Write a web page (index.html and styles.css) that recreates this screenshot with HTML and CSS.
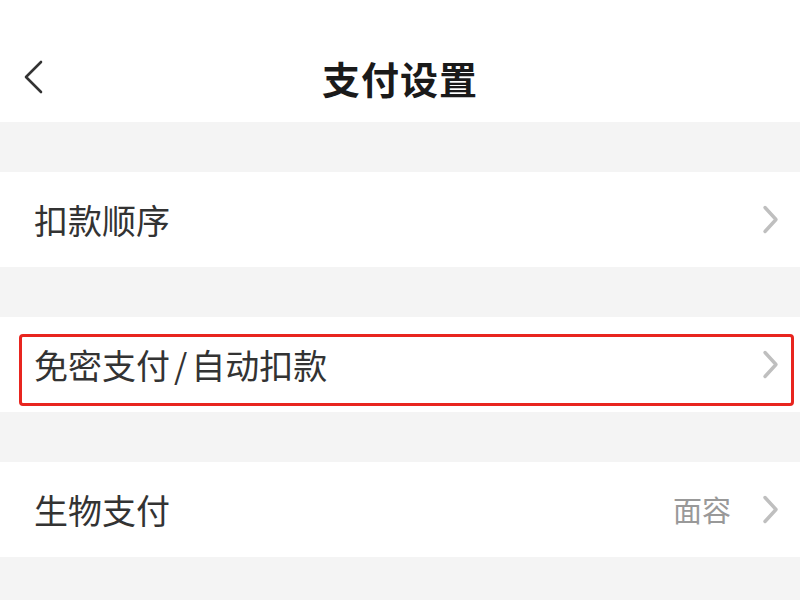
FILE: index.html
```html
<!DOCTYPE html>
<html lang="zh-CN">
<head>
<meta charset="utf-8">
<title>支付设置</title>
<link rel="stylesheet" href="styles.css">
</head>
<body>
<div class="page">
  <header class="header">
    <span class="back">
      <svg width="22" height="34" viewBox="0 0 22 34"><polyline points="19,2 4,17 19,32" fill="none" stroke="#333" stroke-width="2.6" stroke-linecap="round" stroke-linejoin="round"/></svg>
    </span>
    <h1 class="title">支付设置</h1>
  </header>
  <div class="gap"></div>
  <div class="row">
    <span class="label">扣款顺序</span>
    <span class="right">
      <svg class="chev" width="17" height="29" viewBox="0 0 17 29"><polyline points="3,2.5 14,14.5 3,26.5" fill="none" stroke="#bfbfbf" stroke-width="3.4" stroke-linecap="round" stroke-linejoin="round"/></svg>
    </span>
  </div>
  <div class="gap"></div>
  <div class="row row-marked">
    <span class="label">免密支付<span class="slash">/</span>自动扣款</span>
    <span class="right">
      <svg class="chev" width="17" height="29" viewBox="0 0 17 29"><polyline points="3,2.5 14,14.5 3,26.5" fill="none" stroke="#bfbfbf" stroke-width="3.4" stroke-linecap="round" stroke-linejoin="round"/></svg>
    </span>
    <div class="mark"></div>
  </div>
  <div class="gap"></div>
  <div class="row">
    <span class="label">生物支付</span>
    <span class="right">
      <span class="value">面容</span>
      <svg class="chev" width="17" height="29" viewBox="0 0 17 29"><polyline points="3,2.5 14,14.5 3,26.5" fill="none" stroke="#bfbfbf" stroke-width="3.4" stroke-linecap="round" stroke-linejoin="round"/></svg>
    </span>
  </div>
</div>
</body>
</html>
```

FILE: styles.css
```css
* { box-sizing: border-box; }
html, body {
  margin: 0;
  padding: 0;
  background: #f4f4f4;
  font-family: "Noto Sans CJK SC", "Noto Sans", sans-serif;
}
.page {
  width: 800px;
  height: 600px;
  overflow: hidden;
  display: flex;
  flex-direction: column;
}
.header {
  height: 122px;
  background: #fff;
  display: flex;
  align-items: center;
  justify-content: center;
  position: relative;
}
.back {
  position: absolute;
  left: 22px;
  top: 60px;
  display: flex;
}
.title {
  margin: 0;
  margin-top: 34px;
  font-size: 38px;
  font-weight: 700;
  color: #1a1a1a;
  line-height: 1;
  letter-spacing: 1px;
}
.gap { height: 50px; flex: none; }
.row {
  height: 95px;
  flex: none;
  background: #fff;
  display: flex;
  align-items: center;
  justify-content: space-between;
  padding: 0 21px 0 34px;
}
.row-marked { position: relative; }
.label {
  font-size: 34px;
  color: #333;
  line-height: 1;
}
.slash { padding: 0 4px; }
.right {
  display: flex;
  align-items: center;
  gap: 31px;
}
.value {
  font-size: 29px;
  color: #999;
  line-height: 1;
}
.chev { display: block; }
.mark {
  position: absolute;
  left: 19px;
  top: 17px;
  width: 775px;
  height: 72px;
  border: 3px solid #e8251f;
  border-radius: 4px;
}
```
